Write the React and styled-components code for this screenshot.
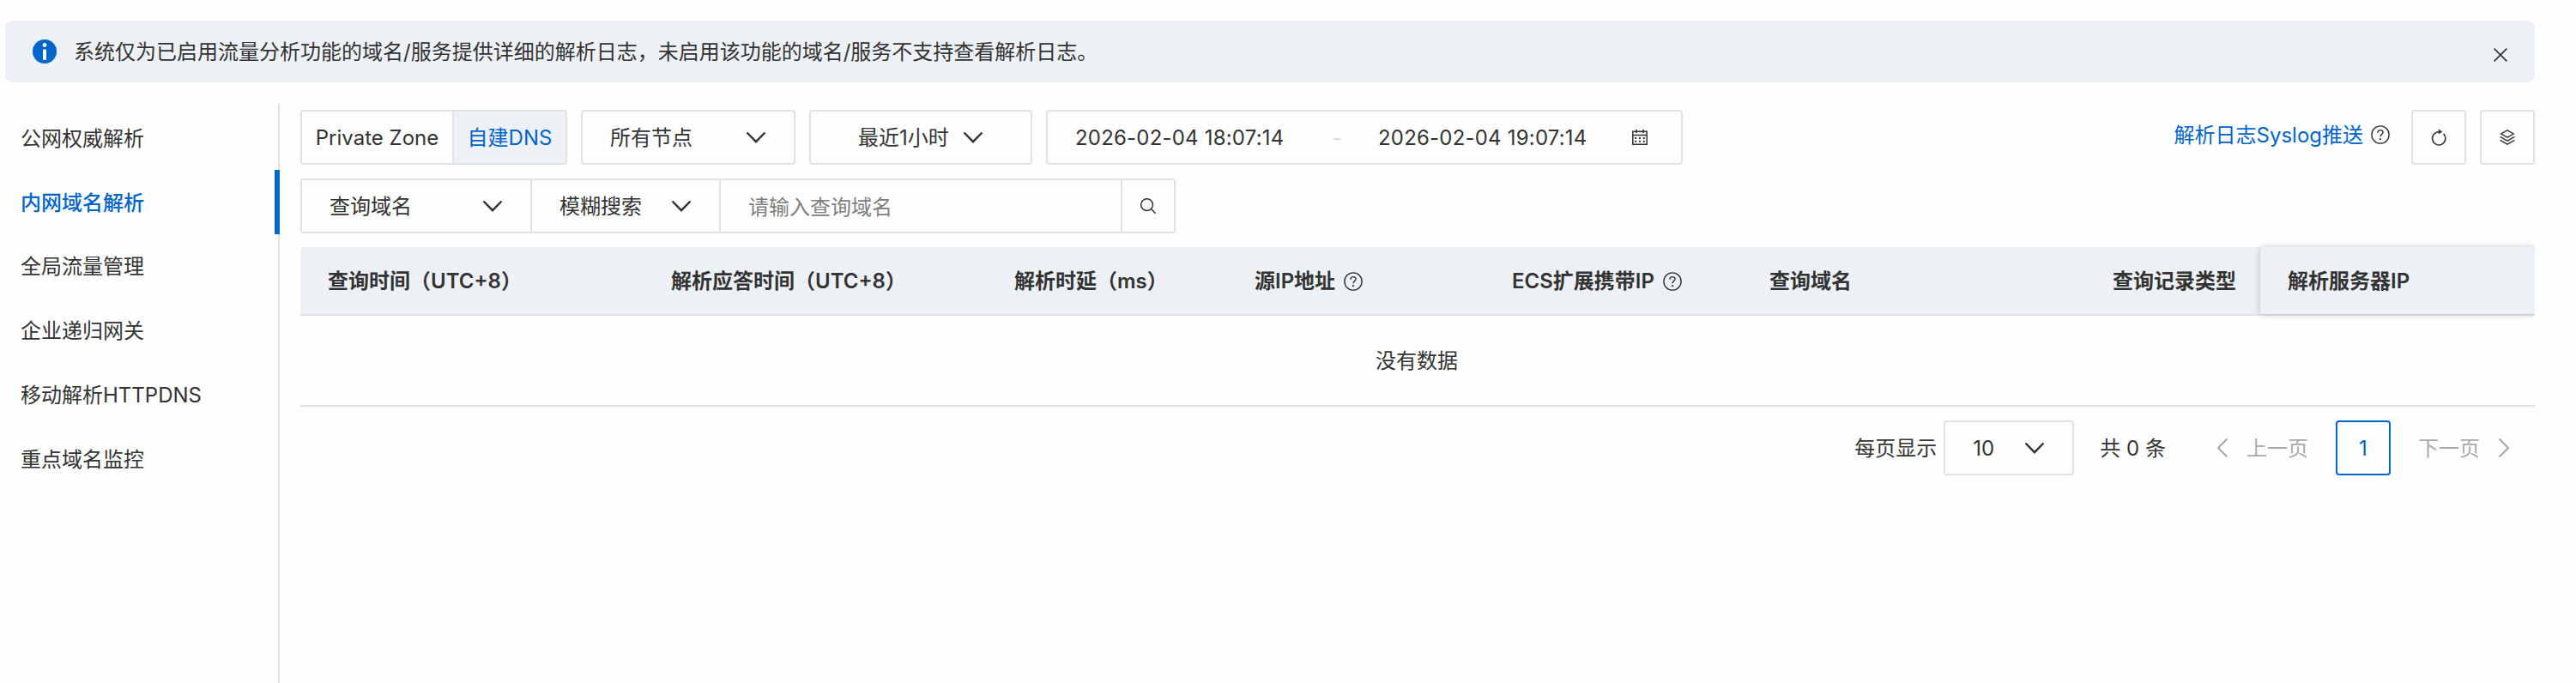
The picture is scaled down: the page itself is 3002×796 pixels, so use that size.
import styled, { createGlobalStyle } from "styled-components";

const sideItems = ["公网权威解析", "内网域名解析", "全局流量管理", "企业递归网关", "移动解析HTTPDNS", "重点域名监控"];

const columns = [
  { title: "查询时间（UTC+8）", width: 400 },
  { title: "解析应答时间（UTC+8）", width: 400 },
  { title: "解析时延（ms）", width: 280 },
  { title: "源IP地址", width: 300, help: true },
  { title: "ECS扩展携带IP", width: 300, help: true },
  { title: "查询域名", width: 400 },
  { title: "查询记录类型", width: 204 },
];

const Chevron = () => (
  <svg width="24" height="14" viewBox="0 0 24 14" fill="none" stroke="#333" strokeWidth="2.4">
    <path d="M1.5 1.5L12 12.2 22.5 1.5" />
  </svg>
);

const Arrow = ({ next }) => (
  <svg width="14" height="24" viewBox="0 0 14 24" fill="none" stroke="#aaa" strokeWidth="2.2">
    <path d={next ? "M1.5 1.5L12 12 1.5 22.5" : "M12.5 1.5L2 12l10.5 10.5"} />
  </svg>
);

const Help = () => (
  <svg width="22" height="22" viewBox="0 0 22 22" fill="none" stroke="#333" strokeWidth="1.4">
    <circle cx="11" cy="11" r="10.1" />
    <path d="M7.9 8.7c0-1.9 1.3-3.1 3.1-3.1s3.1 1.1 3.1 2.7c0 2-3.1 2.3-3.1 5" />
    <circle cx="11" cy="16.2" r="1.1" fill="#333" stroke="none" />
  </svg>
);

function App() {
  return (
    <Page>
      <GlobalStyle />
      <Notice>
        <svg width="28" height="28" viewBox="0 0 28 28">
          <circle cx="14" cy="14" r="14" fill="#0064c8" />
          <circle cx="14" cy="6.5" r="2.4" fill="#fff" />
          <rect x="12" y="11.5" width="4" height="12.5" rx=".8" fill="#fff" />
        </svg>
        <NoticeText>系统仅为已启用流量分析功能的域名/服务提供详细的解析日志，未启用该功能的域名/服务不支持查看解析日志。</NoticeText>
        <Close>
          <svg width="16" height="16" viewBox="0 0 16 16" stroke="#333" strokeWidth="1.7">
            <path d="M.6.6l14.8 14.8M15.4.6L.6 15.4" />
          </svg>
        </Close>
      </Notice>
      <Body>
        <Sidebar>
          {sideItems.map((item, i) => (
            <SideItem key={item} $active={i === 1}>
              <Label>{item}</Label>
            </SideItem>
          ))}
        </Sidebar>
        <Main>
          <Toolbar>
            <Group>
              <Tab $width={175}>
                <Label>Private Zone</Label>
              </Tab>
              <Tab $width={132} $active>
                <Label>自建DNS</Label>
              </Tab>
            </Group>
            <Select $width={250}>
              <Label>所有节点</Label>
              <Chevron />
            </Select>
            <Select $width={260} $center>
              <Label>最近1小时</Label>
              <Chevron />
            </Select>
            <DateRange>
              <DateText>2026-02-04 18:07:14</DateText>
              <Dash>-</Dash>
              <DateText>2026-02-04 19:07:14</DateText>
              <CalendarSlot>
                <svg width="18" height="18" viewBox="0 0 18 18" fill="none" stroke="#333" strokeWidth="1.5">
                  <path d="M.8 2.2h16.4v15H.8zM.8 6.5h16.4M5 0v4.2M13 0v4.2" />
                  <path d="M3.2 10.1h2M8 10.1h2M12.8 10.1h2M3.2 13.8h2M8 13.8h2M12.8 13.8h2" strokeWidth="2" />
                </svg>
              </CalendarSlot>
            </DateRange>
            <Actions>
              <SyslogLink>解析日志Syslog推送</SyslogLink>
              <HelpSlot>
                <Help />
              </HelpSlot>
              <IconButton>
                <svg width="18" height="20" viewBox="0 0 18 20" fill="none" stroke="#333" strokeWidth="1.6">
                  <path d="M14.6 5.9A7.6 7.6 0 1 1 9 3.7" />
                  <path d="M8.8.6l4.7 3-4.7 3z" fill="#333" stroke="none" />
                </svg>
              </IconButton>
              <IconButton>
                <svg width="18" height="18" viewBox="0 0 18 18" fill="none" stroke="#333" strokeWidth="1.4">
                  <path d="M9 .8l7.3 4.2L9 9.2 1.7 5z" />
                  <path d="M.6 8.4L9 13.1l8.4-4.7M.6 12.4L9 17.1l8.4-4.7" />
                </svg>
              </IconButton>
            </Actions>
          </Toolbar>
          <SearchBar>
            <SearchSelect $width={268}>
              <Label>查询域名</Label>
              <Chevron />
            </SearchSelect>
            <SearchSelect $width={220}>
              <Label>模糊搜索</Label>
              <Chevron />
            </SearchSelect>
            <SearchInput placeholder="请输入查询域名" />
            <SearchButton>
              <svg width="18" height="18" viewBox="0 0 18 18" fill="none" stroke="#333" strokeWidth="1.5">
                <circle cx="7.6" cy="7.6" r="6.9" />
                <path d="M12.5 12.5l5.2 5.2" />
              </svg>
            </SearchButton>
          </SearchBar>
          <TableHead>
            {columns.map((column) => (
              <Column key={column.title} $width={column.width}>
                <Label>{column.title}</Label>
                {column.help && (
                  <ColumnHelp>
                    <Help />
                  </ColumnHelp>
                )}
              </Column>
            ))}
            <FixedColumn>
              <Label>解析服务器IP</Label>
            </FixedColumn>
          </TableHead>
          <Empty>
            <Label>没有数据</Label>
          </Empty>
          <Pagination>
            <Label>每页显示</Label>
            <PageSize>
              <Label>10</Label>
              <Chevron />
            </PageSize>
            <Total>共 0 条</Total>
            <Step>
              <Arrow />
              <Label>上一页</Label>
            </Step>
            <Current>
              <Label>1</Label>
            </Current>
            <Step>
              <Label>下一页</Label>
              <Arrow next />
            </Step>
          </Pagination>
        </Main>
      </Body>
    </Page>
  );
}

const GlobalStyle = createGlobalStyle`
  * {
    box-sizing: border-box;
  }
  body {
    margin: 0;
    background: #fefefe;
  }
  svg {
    display: block;
    flex-shrink: 0;
  }
`;

const Page = styled.div`
  height: 796px;
  padding: 24px 48px 0 6px;
  display: flex;
  flex-direction: column;
  overflow: hidden;
  font-family: Inter, "Noto Sans CJK SC", sans-serif;
  font-size: 24px;
  line-height: 36px;
  color: #333;
  white-space: nowrap;
`;

const Label = styled.span`
  padding-top: 2px;
`;

const Notice = styled.div`
  height: 72px;
  padding: 0 32px;
  display: flex;
  align-items: center;
  flex-shrink: 0;
  border-radius: 8px;
  background: #edf1f6;
`;

const NoticeText = styled.div`
  margin-left: 20px;
  padding-top: 2px;
  flex: 1;
`;

const Close = styled.div`
  padding-top: 8px;
`;

const Body = styled.div`
  margin-top: 25px;
  display: flex;
  flex: 1;
`;

const Sidebar = styled.div`
  width: 320px;
  padding-top: 2px;
  flex-shrink: 0;
  border-right: 2px solid #e2e2e2;
`;

const SideItem = styled.div`
  height: 74.8px;
  margin-right: -2px;
  padding: 1px 0 0 18px;
  display: flex;
  align-items: center;
  border-right: ${({ $active }) => ($active ? "6px solid #0064c8" : "none")};
  color: ${({ $active }) => ($active ? "#0064c8" : "#333")};
  font-weight: ${({ $active }) => ($active ? 500 : 400)};
`;

const Main = styled.div`
  flex: 1;
  min-width: 0;
  padding: 7px 0 0 24px;
`;

const Toolbar = styled.div`
  height: 64px;
  display: flex;
  gap: 16px;
`;

const Outlined = styled.div`
  height: 64px;
  display: flex;
  align-items: center;
  border: 2px solid #e2e2e2;
  border-radius: 4px;
`;

const Group = styled(Outlined)`
  overflow: hidden;
`;

const Tab = styled.div`
  width: ${({ $width }) => $width}px;
  height: 60px;
  display: flex;
  align-items: center;
  justify-content: center;
  color: ${({ $active }) => ($active ? "#0064c8" : "#333")};
  background: ${({ $active }) => ($active ? "#edf1f6" : "transparent")};
  border-left: ${({ $active }) => ($active ? "2px solid #e2e2e2" : "none")};
`;

const Select = styled(Outlined)`
  width: ${({ $width }) => $width}px;
  padding: 0 32px;
  gap: 16px;
  justify-content: ${({ $center }) => ($center ? "center" : "space-between")};
`;

const DateRange = styled(Outlined)`
  width: 742px;
  padding: 0 39px 0 32px;
`;

const DateText = styled.div`
  width: 246px;
  padding-top: 2px;
  letter-spacing: 0.2px;
`;

const Dash = styled.div`
  width: 107px;
  padding: 2px 0 0 11px;
  text-align: center;
  color: #ddd;
`;

const CalendarSlot = styled.div`
  margin-left: auto;
`;

const Actions = styled.div`
  margin-left: auto;
  display: flex;
`;

const SyslogLink = styled.div`
  padding-top: 12px;
  color: #0064c8;
`;

const HelpSlot = styled.div`
  padding: 18px 25px 0 9px;
`;

const IconButton = styled(Outlined)`
  width: 64px;
  justify-content: center;
  & + & {
    margin-left: 16px;
  }
`;

const SearchBar = styled(Outlined)`
  width: 1020px;
  margin-top: 16px;
`;

const SearchSelect = styled.div`
  width: ${({ $width }) => $width}px;
  height: 60px;
  padding: 0 32px;
  display: flex;
  align-items: center;
  justify-content: space-between;
  border-right: 2px solid #e2e2e2;
`;

const SearchInput = styled.input`
  flex: 1;
  min-width: 0;
  height: 60px;
  padding: 2px 32px 0;
  border: none;
  background: transparent;
  font: inherit;
  &::placeholder {
    color: #808080;
  }
`;

const SearchButton = styled.div`
  width: 62px;
  height: 60px;
  display: flex;
  align-items: center;
  justify-content: center;
  border-left: 2px solid #e2e2e2;
`;

const TableHead = styled.div`
  height: 80px;
  margin-top: 16px;
  display: flex;
  border-bottom: 2px solid #e0e1e3;
  border-radius: 4px 4px 0 0;
  background: #edf1f6;
  font-weight: 600;
`;

const Column = styled.div`
  width: ${({ $width }) => $width}px;
  padding-left: 32px;
  display: flex;
  flex-shrink: 0;
  align-items: center;
  gap: 10px;
`;

const ColumnHelp = styled.span`
  padding-top: 2px;
`;

const FixedColumn = styled.div`
  flex: 1;
  padding-left: 32px;
  display: flex;
  align-items: center;
  background: #edf1f6;
  border-radius: 4px 4px 0 0;
  box-shadow: 0 0 8px rgba(0, 0, 0, 0.2);
  /* keep the shadow off the right edge of the table */
  clip-path: inset(-8px 0 -8px -8px);
`;

const Empty = styled.div`
  height: 106px;
  padding-right: 2px;
  display: flex;
  align-items: center;
  justify-content: center;
  border-bottom: 2px solid #e2e2e2;
`;

const Pagination = styled.div`
  margin-top: 16px;
  padding-right: 29px;
  display: flex;
  align-items: center;
  justify-content: flex-end;
`;

const PageSize = styled(Outlined)`
  width: 152px;
  margin-left: 8px;
  padding: 0 32px;
  justify-content: space-between;
`;

const Total = styled.div`
  margin: 0 59px 0 30px;
  padding-top: 2px;
`;

const Step = styled.div`
  display: flex;
  align-items: center;
  gap: 21px;
  color: #aaa;
`;

const Current = styled(Outlined)`
  width: 64px;
  margin: 0 32px;
  justify-content: center;
  border-color: #0064c8;
  color: #0064c8;
`;

export default App;
